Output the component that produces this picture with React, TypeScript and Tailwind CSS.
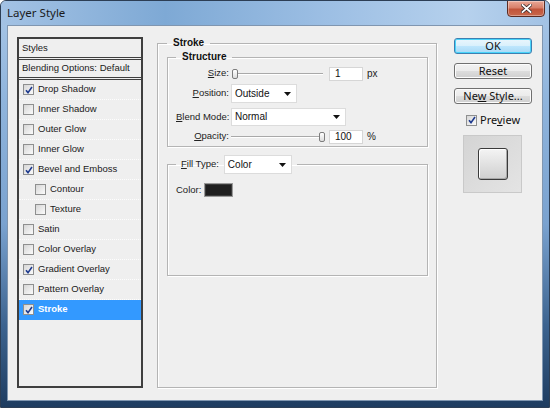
import React from 'react';

const ui = "font-['Liberation_Sans',Arial,sans-serif]";
const seg = "font-['Noto_Sans','Liberation_Sans',sans-serif]";

const Check: React.FC<{ on?: boolean }> = ({ on }) => (
  <span className="w-[11px] h-[11px] border border-[#8e8f8f] bg-[linear-gradient(135deg,#d6d6d6,#fbfbfb)] flex items-center justify-center shrink-0">
    {on && (
      <svg width="8" height="8" viewBox="0 0 8 8">
        <path d="M1 4.2 L3 6.6 L7 1" stroke="#1f3b8f" strokeWidth="1.6" fill="none" />
      </svg>
    )}
  </span>
);

interface StyleRow {
  label: string;
  on?: boolean;
  indent?: boolean;
  selected?: boolean;
}

const rows: StyleRow[] = [
  { label: 'Drop Shadow', on: true },
  { label: 'Inner Shadow' },
  { label: 'Outer Glow' },
  { label: 'Inner Glow' },
  { label: 'Bevel and Emboss', on: true },
  { label: 'Contour', indent: true },
  { label: 'Texture', indent: true },
  { label: 'Satin' },
  { label: 'Color Overlay' },
  { label: 'Gradient Overlay', on: true },
  { label: 'Pattern Overlay' },
  { label: 'Stroke', on: true, selected: true },
];

const Arrow = () => (
  <svg width="7" height="4" viewBox="0 0 7 4">
    <path d="M0 0 H7 L3.5 4 Z" fill="#111" />
  </svg>
);

const Select: React.FC<{ value: string; w: string; h: string }> = ({ value, w, h }) => (
  <div className={`${w} ${h} bg-white border border-[#dcdcdc] flex items-center justify-between pl-[3px] pr-[5px] text-[10px] leading-none text-[#111]`}>
    <span>{value}</span>
    <Arrow />
  </div>
);

const Slider: React.FC<{ at: 'start' | 'end' }> = ({ at }) => (
  <div className={`relative w-[92px] h-[12px] flex items-center ${at === 'start' ? 'pl-[2px]' : ''}`}>
    <div className="w-full h-[2px] border-t border-[#a9a9a9] border-b border-b-white" />
    <span
      className={`absolute top-[1px] ${at === 'start' ? 'left-[1px]' : 'right-[-2px]'} w-[6px] h-[10px] rounded-[2px] border border-[#7d7d7d] bg-[linear-gradient(180deg,#ffffff,#dcdcdc)]`}
    />
  </div>
);

const Num: React.FC<{ value: string }> = ({ value }) => (
  <div className="w-[34px] h-[14px] bg-white border border-[#d6d6d6] flex items-center pl-[5px] text-[10px] leading-none text-[#111]">
    {value}
  </div>
);

const Label: React.FC<{ k: string; rest: string }> = ({ k, rest }) => (
  <span className="w-[53px] text-right text-[9.5px] text-[#222] whitespace-nowrap shrink-0">
    <span className="underline">{k}</span>
    {rest}
  </span>
);

const Button: React.FC<{ children: React.ReactNode; primary?: boolean }> = ({ children, primary }) => (
  <div
    className={`h-[16px] rounded-[3px] flex items-center justify-center text-[11px] text-[#111] ${
      primary
        ? 'border border-[#3c7fb1] bg-[linear-gradient(180deg,#eaf6fd_0%,#d9f0fc_50%,#bee6fd_51%,#a7d9f5_100%)] shadow-[inset_0_0_0_1px_#48d4fa]'
        : 'border border-[#707070] bg-[linear-gradient(180deg,#f2f2f2_0%,#ebebeb_50%,#dddddd_51%,#cfcfcf_100%)] shadow-[inset_0_0_0_1px_#fcfcfc]'
    }`}
  >
    {children}
  </div>
);

export default function App() {
  return (
    <div className={`w-[550px] h-[408px] flex flex-col rounded-t-[6px] border border-[#2c3e55] overflow-hidden bg-[linear-gradient(180deg,#a9c7e7_0%,#8fb4dc_25%,#7aa2cf_55%,#3c638f_80%,#1e3c60_100%)] ${ui}`}>
      {/* Title bar */}
      <div className="relative h-[24px] flex items-center pl-[6px] bg-[linear-gradient(90deg,#a3c2e4_0%,#7ea9d5_30%,#9dbfe4_60%,#b6d1ed_85%,#a2c2e4_100%)]">
        <span className={`text-[11.5px] text-[#1b1b1b] ${seg}`}>Layer Style</span>
        <div className="absolute right-[4px] top-[-1px] w-[38px] h-[17px] rounded-b-[4px] border border-[#5b2b22] bg-[linear-gradient(180deg,#e9a897_0%,#d8806a_45%,#c1543a_55%,#c8684c_100%)] flex items-center justify-center shadow-[inset_0_0_0_1px_rgba(255,255,255,0.35)]">
          <svg width="11" height="9" viewBox="0 0 11 9">
            <path d="M1.5 1 L9.5 8 M9.5 1 L1.5 8" stroke="#3a2a2a" strokeWidth="3.4" strokeLinecap="square" />
            <path d="M1.5 1 L9.5 8 M9.5 1 L1.5 8" stroke="#ffffff" strokeWidth="1.8" strokeLinecap="square" />
          </svg>
        </div>
      </div>

      {/* Client area */}
      <div className="flex-1 mx-[6px] mb-[6px] border border-[#8096b0] bg-[#efefef] flex pt-[11px] pl-[9px] pr-[9px] pb-[12px]">
        {/* Styles list */}
        <div className="w-[126px] border-2 border-[#3f3f3f] flex flex-col text-[9.5px] text-[#1a1a1a]">
          <div className="h-[21px] flex items-center pl-[3px] border-b-[3px] border-double border-[#3f3f3f]">Styles</div>
          <div className="h-[20px] flex items-center pl-[3px] border-b-[3px] border-double border-[#3f3f3f]">
            Blending Options: Default
          </div>
          {rows.map((r) => (
            <div
              key={r.label}
              className={`h-[20px] flex items-center gap-[4px] border-b border-dotted ${
                r.indent ? 'pl-[16px]' : 'pl-[4px]'
              } ${r.selected ? 'bg-[#3399ff] border-[#3399ff] text-white font-bold' : 'border-[#fdfdfd]'}`}
            >
              <Check on={r.on} />
              <span>{r.label}</span>
            </div>
          ))}
        </div>

        {/* Stroke panel */}
        <fieldset className="ml-[14px] w-[280px] border border-[#b4b4b4] shadow-[inset_1px_1px_0_#ffffff,1px_1px_0_#ffffff] pl-[9px] pr-[8px]">
          <legend className="px-[6px] text-[10px] leading-[12px] font-bold text-[#111]">Stroke</legend>

          <fieldset className="mt-[2px] border border-[#b4b4b4] shadow-[inset_1px_1px_0_#ffffff,1px_1px_0_#ffffff] pl-[8px] pt-[3px] pb-[2px] flex flex-col">
            <legend className="px-[6px] text-[10px] leading-[12px] font-bold text-[#111]">Structure</legend>
            <div className="h-[15px] flex items-center">
              <Label k="S" rest="ize:" />
              <div className="ml-[2px]">
                <Slider at="start" />
              </div>
              <div className="ml-[6px]">
                <Num value="1" />
              </div>
              <span className="ml-[4px] text-[10px] text-[#222]">px</span>
            </div>
            <div className="mt-[3px] h-[19px] flex items-center">
              <Label k="P" rest="osition:" />
              <div className="ml-[2px]">
                <Select value="Outside" w="w-[66px]" h="h-[19px]" />
              </div>
            </div>
            <div className="mt-[5px] h-[18px] flex items-center">
              <Label k="B" rest="lend Mode:" />
              <div className="ml-[2px]">
                <Select value="Normal" w="w-[115px]" h="h-[18px]" />
              </div>
            </div>
            <div className="mt-[3px] h-[15px] flex items-center">
              <Label k="O" rest="pacity:" />
              <div className="ml-[2px]">
                <Slider at="end" />
              </div>
              <div className="ml-[6px]">
                <Num value="100" />
              </div>
              <span className="ml-[4px] text-[10px] text-[#222]">%</span>
            </div>
          </fieldset>

          <fieldset className="mt-[8px] h-[121px] border border-[#b4b4b4] shadow-[inset_1px_1px_0_#ffffff,1px_1px_0_#ffffff] pl-[8px]">
            <legend className="px-[5px] flex items-center text-[9.5px] text-[#222]">
              <span>
                <span className="underline">F</span>ill Type:
              </span>
              <div className="ml-[5px]">
                <Select value="Color" w="w-[68px]" h="h-[19px]" />
              </div>
            </legend>
            <div className="mt-[9px] flex items-center text-[9.5px] text-[#222]">
              <span>Color:</span>
              <span className="ml-[3px] w-[29px] h-[14px] border border-[#9a9a9a] bg-[#1f1f1f] shadow-[inset_0_0_0_1px_#3a3a3a]" />
            </div>
          </fieldset>
        </fieldset>

        {/* Buttons */}
        <div className={`ml-[17px] w-[78px] flex flex-col pt-[1px] ${seg}`}>
          <Button primary>OK</Button>
          <div className="mt-[9px]">
            <Button>Reset</Button>
          </div>
          <div className="mt-[9px]">
            <Button>
              <span>
                Ne<span className="underline">w</span> Style...
              </span>
            </Button>
          </div>
          <div className="mt-[8px] pl-[12px] flex items-center gap-[3px] text-[11px] text-[#111]">
            <Check on />
            <span>
              Pre<span className="underline">v</span>iew
            </span>
          </div>
          <div className="mt-[6px] ml-[9px] w-[59px] h-[58px] border border-[#c9c9c9] bg-[linear-gradient(135deg,#d4d4d4,#e4e4e4)] flex items-center justify-center">
            <div className="w-[30px] h-[32px] rounded-[3px] border border-[#3a3a3a] bg-[linear-gradient(180deg,#f4f4f4,#cfcfcf)] shadow-[inset_1px_1px_0_#ffffff,inset_-1px_-1px_0_#a8a8a8]" />
          </div>
        </div>
      </div>
    </div>
  );
}
